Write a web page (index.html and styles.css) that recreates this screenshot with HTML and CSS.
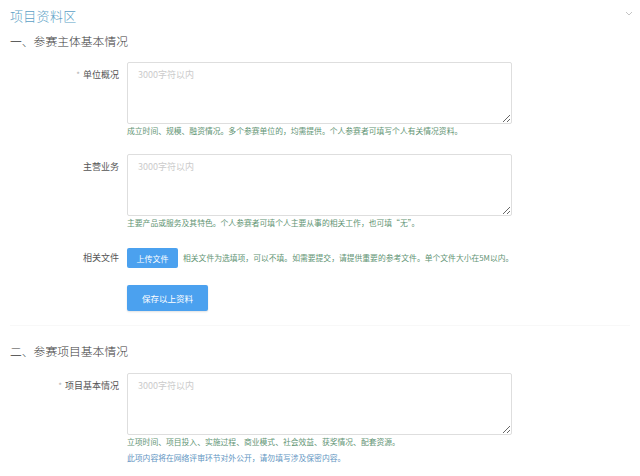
FILE: index.html
```html
<!DOCTYPE html>
<html lang="zh">
<head>
<meta charset="utf-8">
<title>项目资料区</title>
<link rel="stylesheet" href="styles.css">
</head>
<body>
<div class="page">
  <div class="topbar">
    <h1 class="title">项目资料区</h1>
    <svg class="chev" width="8" height="5" viewBox="0 0 8 5"><path d="M1 1 L4 4 L7 1" fill="none" stroke="#c4c4c4" stroke-width="1"/></svg>
  </div>

  <h2 class="section">一、参赛主体基本情况</h2>

  <div class="field first">
    <label class="label"><span class="req">*</span>单位概况</label>
    <div class="control">
      <textarea class="area" placeholder="3000字符以内"></textarea>
      <p class="help">成立时间、规模、融资情况。多个参赛单位的，均需提供。个人参赛者可填写个人有关情况资料。</p>
    </div>
  </div>

  <div class="field second">
    <label class="label">主营业务</label>
    <div class="control">
      <textarea class="area" placeholder="3000字符以内"></textarea>
      <p class="help">主要产品或服务及其特色。个人参赛者可填个人主要从事的相关工作，也可填“无”。</p>
    </div>
  </div>

  <div class="field upload-row">
    <label class="label">相关文件</label>
    <div class="control inline">
      <button class="btn btn-small">上传文件</button>
      <span class="help">相关文件为选填项，可以不填。如需要提交，请提供重要的参考文件。单个文件大小在5M以内。</span>
    </div>
  </div>

  <div class="save-row">
    <button class="btn btn-save">保存以上资料</button>
  </div>

  <h2 class="section section-two">二、参赛项目基本情况</h2>

  <div class="field third">
    <label class="label"><span class="req">*</span>项目基本情况</label>
    <div class="control">
      <textarea class="area" placeholder="3000字符以内"></textarea>
      <p class="help two">立项时间、项目投入、实施过程、商业模式、社会效益、获奖情况、配套资源。</p>
      <p class="help two note">此项内容将在网络评审环节对外公开，请勿填写涉及保密内容。</p>
    </div>
  </div>
</div>
</body>
</html>
```

FILE: styles.css
```css
html, body {
  margin: 0;
  padding: 0;
  background: #ffffff;
}

body {
  font-family: "Noto Sans CJK SC", "Noto Sans", "Liberation Sans", sans-serif;
  color: #444;
  width: 640px;
  height: 476px;
  overflow: hidden;
}

.page {
  padding: 0 0 0 10px;
}

.topbar {
  display: flex;
  justify-content: space-between;
  align-items: center;
  padding-top: 6px;
  padding-right: 7px;
}

.title {
  margin: 0;
  font-size: 13px;
  line-height: 20px;
  font-weight: 300;
  color: #5b9fc6;
  letter-spacing: 0.3px;
}

.chev {
  display: block;
  margin-top: -6px;
}

.section {
  margin: 6px 0 0;
  font-size: 11.8px;
  line-height: 18px;
  font-weight: 300;
  color: #3a3a3a;
}

.field {
  display: flex;
  align-items: flex-start;
}

.first { margin-top: 12px; }
.second { margin-top: 17px; }
.third { margin-top: 13px; }

.label {
  width: 109px;
  flex: none;
  padding-right: 8px;
  box-sizing: content-box;
  text-align: right;
  font-size: 9px;
  line-height: 12px;
  padding-top: 7px;
  color: #555;
}

.req {
  color: #b0b0b0;
  margin-right: 3px;
  font-size: 8px;
}

.control {
  flex: none;
}

.area {
  display: block;
  box-sizing: border-box;
  width: 385px;
  height: 62px;
  margin: 0;
  padding: 6px 10px;
  border: 1px solid #dedede;
  border-radius: 2px;
  font-family: inherit;
  font-size: 9px;
  line-height: 12px;
  color: #555;
  background: #fff;
}

.area::placeholder {
  color: #cbcbcb;
}

.help {
  margin: 1px 0 0;
  font-size: 7.8px;
  line-height: 12px;
  color: #5f9474;
  white-space: nowrap;
}

.help.two {
  line-height: 16px;
  margin-top: -1px;
}

.help.two.note {
  margin-top: 0;
  color: #6295c2;
}

.upload-row {
  margin-top: 19px;
  align-items: center;
}

.upload-row .label {
  padding-top: 0;
}

.inline {
  display: flex;
  align-items: center;
}

.inline .help {
  margin: 0 0 0 5px;
}

.btn {
  border: none;
  background: #4ba1ef;
  color: #fff;
  font-family: inherit;
  border-radius: 2px;
  padding: 0;
  cursor: pointer;
}

.btn-small {
  width: 51px;
  height: 20px;
  font-size: 8px;
}

.save-row {
  margin-top: 17px;
  padding-left: 117px;
  padding-bottom: 14px;
  margin-right: 10px;
  border-bottom: 1px solid #f8f8f8;
}

.btn-save {
  display: block;
  width: 81px;
  height: 26px;
  font-size: 8.5px;
  box-shadow: 0 1px 2px rgba(0, 0, 0, 0.12);
}

.section-two {
  margin-top: 16px;
}
```
